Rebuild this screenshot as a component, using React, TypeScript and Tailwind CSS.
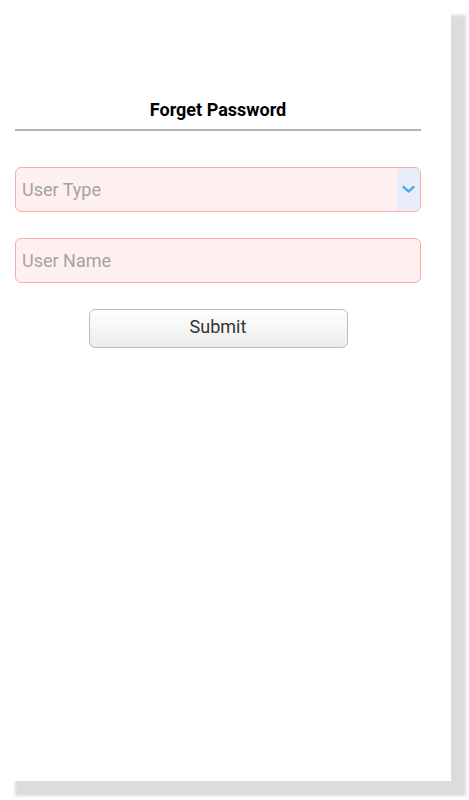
import { useState } from "react";

export default function App() {
  const [userType, setUserType] = useState("");
  const [userName, setUserName] = useState("");

  return (
    <div className="min-h-[800px] bg-white font-['Roboto',sans-serif]">
      <div className="w-[451px] h-[781px] bg-white shadow-[15px_15px_3px_#dcdcdc]">
        <div className="pt-[99px] pl-[15px] w-[421px]">
          <h1 className="text-center text-[18px] font-bold text-black leading-[22px]">
            Forget Password
          </h1>

          <div className="mt-[8px] h-[2px] bg-[#b4b4b4]" />

          <div className="mt-[36px] relative h-[45px] rounded-[6px] border border-[#ffaaaa] bg-[#fff0f0] overflow-hidden flex">
            <select
              value={userType}
              onChange={(e) => setUserType(e.target.value)}
              className="flex-1 appearance-none bg-transparent px-[6px] text-[18px] text-[#a3a3a3] outline-none"
            >
              <option value="">User Type</option>
              <option value="student">Student</option>
              <option value="staff">Staff</option>
            </select>
            <div className="w-[23px] bg-[#e8edf9] flex items-center justify-center">
              <svg width="13" height="9" viewBox="0 0 13 9" fill="none">
                <path d="M1.5 2 L6.5 6.5 L11.5 2" stroke="#5aaaea" strokeWidth="2.4" strokeLinecap="round" strokeLinejoin="round" />
              </svg>
            </div>
          </div>

          <input
            value={userName}
            onChange={(e) => setUserName(e.target.value)}
            placeholder="User Name"
            className="mt-[26px] block w-full h-[45px] rounded-[6px] border border-[#ffaaaa] bg-[#fff0f0] px-[6px] text-[18px] text-[#333] placeholder:text-[#a3a3a3] outline-none"
          />

          <div className="mt-[26px] flex justify-center">
            <button className="w-[259px] h-[39px] pb-[4px] rounded-[6px] border border-[#bcbcbc] bg-gradient-to-b from-white to-[#ececec] text-[18px] text-[#333]">
              Submit
            </button>
          </div>
        </div>
      </div>
    </div>
  );
}
